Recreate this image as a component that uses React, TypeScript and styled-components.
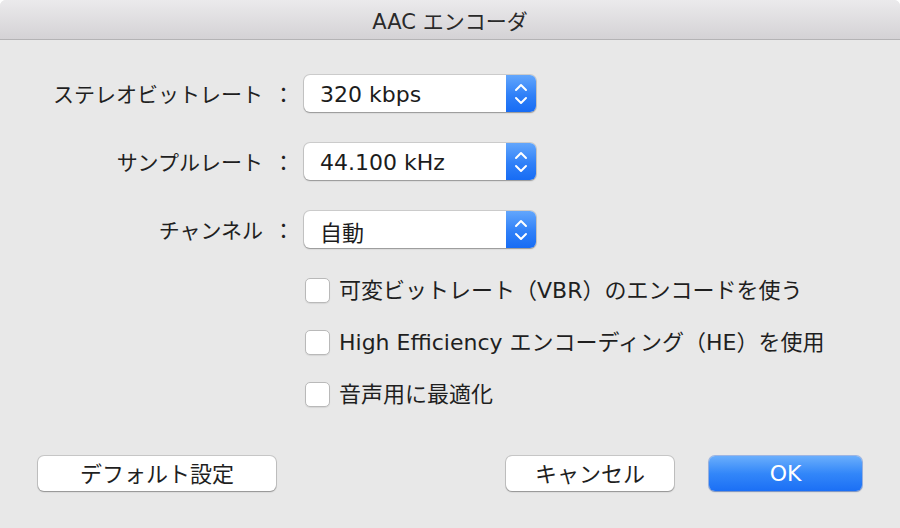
import React from 'react';
import styled, { createGlobalStyle } from 'styled-components';

const GlobalStyle = createGlobalStyle`
  html, body {
    margin: 0;
    padding: 0;
    background: #ffffff;
  }
  body {
    font-family: "DejaVu Sans", "Noto Sans CJK JP", sans-serif;
    color: #1f1f1f;
  }
`;

const Window = styled.div`
  width: 900px;
  height: 528px;
  display: flex;
  flex-direction: column;
  background: #e8e8e8;
  border-radius: 6px 6px 0 0;
  overflow: hidden;
`;

const TitleBar = styled.div`
  height: 39px;
  flex-shrink: 0;
  display: flex;
  align-items: center;
  justify-content: center;
  background: linear-gradient(to bottom, #ebeaec 0%, #d4d2d5 100%);
  border-bottom: 1px solid #b4b3b5;
  font-size: 21px;
  color: #2a2a2a;
`;

const Body = styled.div`
  flex: 1;
  display: flex;
  flex-direction: column;
  padding: 35px 0 37px;
`;

const Form = styled.div`
  display: grid;
  grid-template-columns: 294px 232px;
  grid-auto-rows: 37px;
  column-gap: 10px;
  row-gap: 31px;
  align-items: center;
`;

const Label = styled.div`
  text-align: right;
  font-size: 21px;
  height: 37px;
  box-sizing: border-box;
  padding-top: 4px;
  line-height: 33px;
  white-space: nowrap;
`;

const Colon = styled.span`
  margin-left: 10px;
`;

const Popup = styled.div`
  height: 37px;
  display: flex;
  align-items: stretch;
  background: #ffffff;
  border-radius: 6px;
  box-shadow: 0 0 0 1px rgba(0, 0, 0, 0.12), 0 1px 1.5px rgba(0, 0, 0, 0.28);
  overflow: hidden;
`;

const PopupValue = styled.div`
  flex: 1;
  display: flex;
  align-items: center;
  padding: 2px 0 0 16px;
  font-size: 22px;
  color: #1c1c1c;
`;

const Stepper = styled.div`
  width: 30px;
  display: flex;
  align-items: center;
  justify-content: center;
  background: linear-gradient(to bottom, #62a6fc 0%, #2f80f8 55%, #176cf4 100%);
`;

const Checks = styled.div`
  display: flex;
  flex-direction: column;
  gap: 27px;
  padding-left: 305px;
  margin-top: 30px;
`;

const CheckRow = styled.label`
  display: flex;
  align-items: center;
  gap: 9px;
  height: 25px;
  line-height: 25px;
  font-size: 22px;
  white-space: nowrap;
`;

const Box = styled.span`
  width: 25px;
  height: 25px;
  box-sizing: border-box;
  border-radius: 5px;
  background: #ffffff;
  border: 1px solid #b9b9b9;
  box-shadow: 0 1px 1px rgba(0, 0, 0, 0.08);
  flex-shrink: 0;
`;

const Footer = styled.div`
  margin-top: auto;
  display: flex;
  justify-content: space-between;
  padding: 0 38px;
`;

const ButtonGroup = styled.div`
  display: flex;
  gap: 35px;
`;

const Button = styled.button<{ $width: number; $primary?: boolean }>`
  width: ${p => p.$width}px;
  height: 35px;
  border: none;
  border-radius: 6px;
  font-family: inherit;
  font-size: 22px;
  padding: 0 0 ${p => (p.$primary ? 0 : 3)}px;
  color: ${p => (p.$primary ? '#ffffff' : '#1f1f1f')};
  background: ${p =>
    p.$primary
      ? 'linear-gradient(to bottom, #6aaefc 0%, #3387f9 50%, #1b6ff5 100%)'
      : '#ffffff'};
  box-shadow: ${p =>
    p.$primary
      ? '0 0 0 1px rgba(20, 90, 220, 0.35), 0 1px 1.5px rgba(0, 0, 0, 0.25)'
      : '0 0 0 1px rgba(0, 0, 0, 0.14), 0 1px 1.5px rgba(0, 0, 0, 0.28)'};
  cursor: pointer;
`;

const Chevrons = () => (
  <svg width="30" height="37" viewBox="0 0 30 37" fill="none">
    <path d="M10 15 L15 10 L20 15" stroke="#fff" strokeWidth="2" strokeLinecap="round" strokeLinejoin="round" />
    <path d="M10 23 L15 28 L20 23" stroke="#fff" strokeWidth="2" strokeLinecap="round" strokeLinejoin="round" />
  </svg>
);

const rows = [
  { label: 'ステレオビットレート', value: '320 kbps' },
  { label: 'サンプルレート', value: '44.100 kHz' },
  { label: 'チャンネル', value: '自動' },
];

const checks = [
  '可変ビットレート（VBR）のエンコードを使う',
  'High Efficiency エンコーディング（HE）を使用',
  '音声用に最適化',
];

const App: React.FC = () => {
  return (
    <>
      <GlobalStyle />
      <Window>
        <TitleBar>AAC エンコーダ</TitleBar>
        <Body>
          <Form>
            {rows.map(r => (
              <React.Fragment key={r.label}>
                <Label>
                  {r.label}
                  <Colon>：</Colon>
                </Label>
                <Popup>
                  <PopupValue>{r.value}</PopupValue>
                  <Stepper>
                    <Chevrons />
                  </Stepper>
                </Popup>
              </React.Fragment>
            ))}
          </Form>

          <Checks>
            {checks.map(c => (
              <CheckRow key={c}>
                <Box />
                {c}
              </CheckRow>
            ))}
          </Checks>

          <Footer>
            <Button $width={238}>デフォルト設定</Button>
            <ButtonGroup>
              <Button $width={168}>キャンセル</Button>
              <Button $width={153} $primary>OK</Button>
            </ButtonGroup>
          </Footer>
        </Body>
      </Window>
    </>
  );
};

export default App;
